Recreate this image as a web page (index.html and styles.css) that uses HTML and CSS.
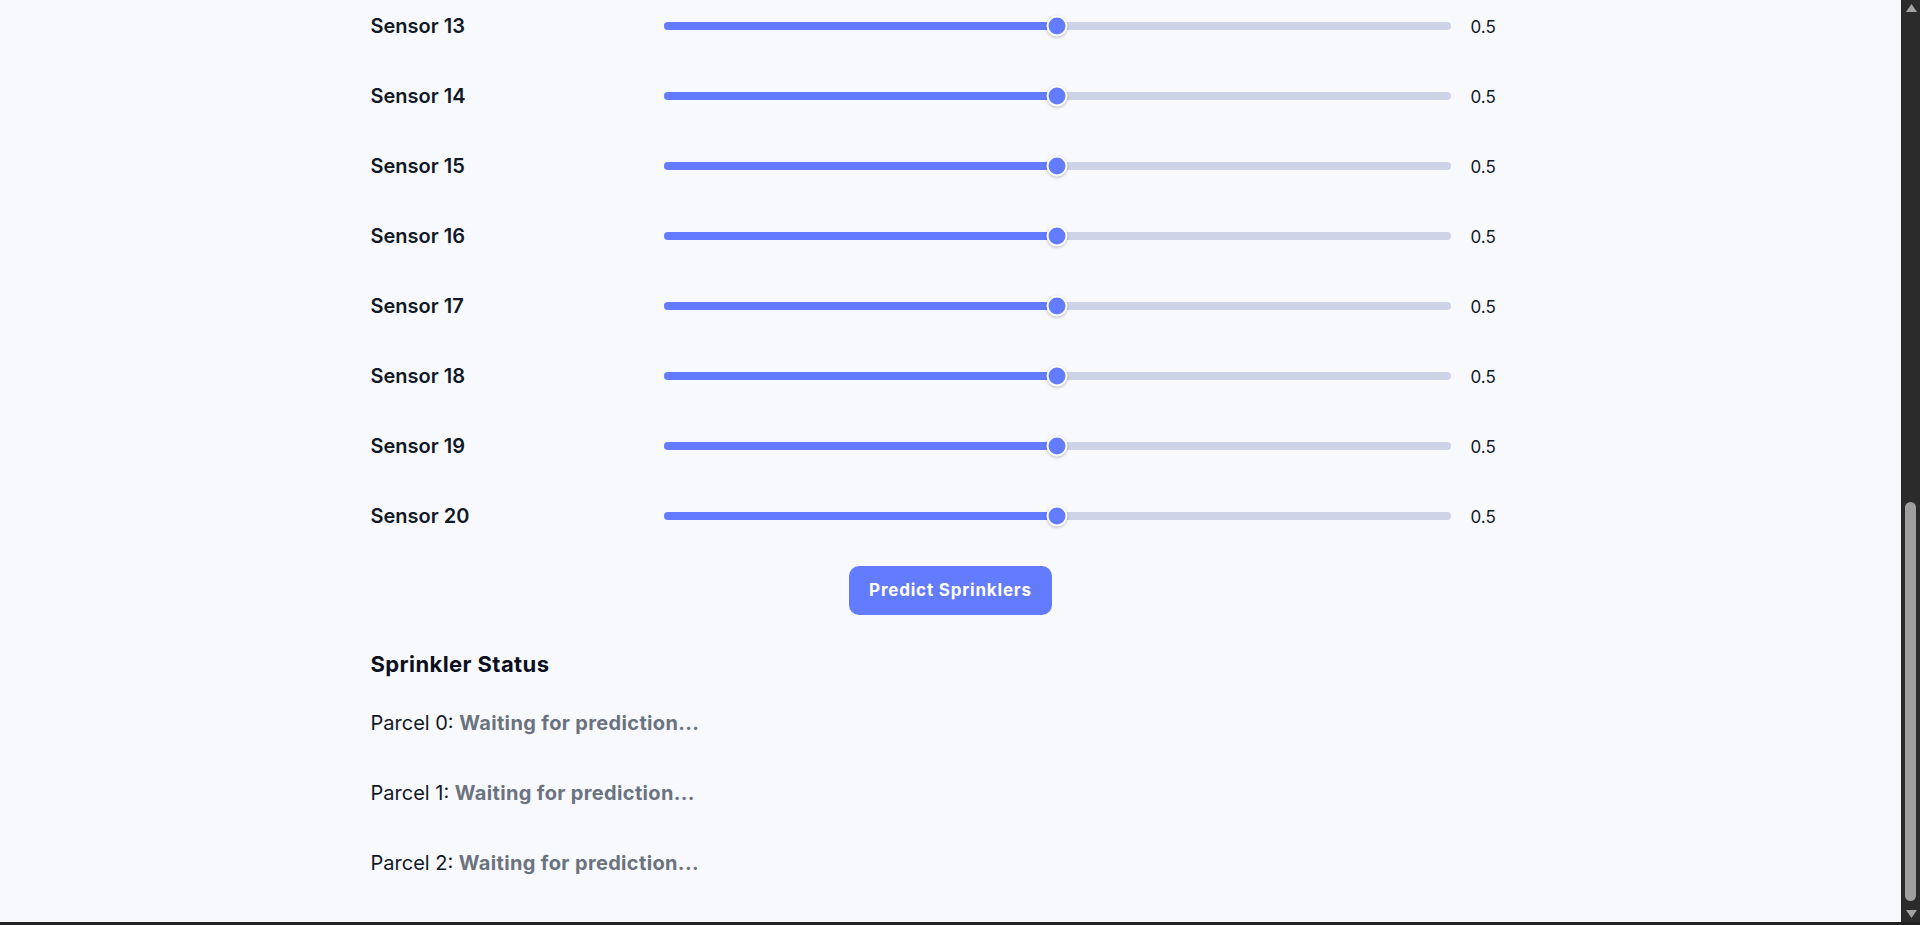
FILE: index.html
```html
<!DOCTYPE html>
<html lang="en">
<head>
<meta charset="utf-8">
<title>Sprinkler Predictor</title>
<link rel="stylesheet" href="styles.css">
</head>
<body>
<div class="window">
  <div class="viewport">
    <main class="container">
      <section class="sensors">
        <div class="sensor-row"><label class="sensor-label">Sensor 13</label><div class="slider"><div class="slider-fill" style="width:50%"></div><div class="slider-thumb" style="left:50%"></div></div><span class="sensor-value">0.5</span></div>
        <div class="sensor-row"><label class="sensor-label">Sensor 14</label><div class="slider"><div class="slider-fill" style="width:50%"></div><div class="slider-thumb" style="left:50%"></div></div><span class="sensor-value">0.5</span></div>
        <div class="sensor-row"><label class="sensor-label">Sensor 15</label><div class="slider"><div class="slider-fill" style="width:50%"></div><div class="slider-thumb" style="left:50%"></div></div><span class="sensor-value">0.5</span></div>
        <div class="sensor-row"><label class="sensor-label">Sensor 16</label><div class="slider"><div class="slider-fill" style="width:50%"></div><div class="slider-thumb" style="left:50%"></div></div><span class="sensor-value">0.5</span></div>
        <div class="sensor-row"><label class="sensor-label">Sensor 17</label><div class="slider"><div class="slider-fill" style="width:50%"></div><div class="slider-thumb" style="left:50%"></div></div><span class="sensor-value">0.5</span></div>
        <div class="sensor-row"><label class="sensor-label">Sensor 18</label><div class="slider"><div class="slider-fill" style="width:50%"></div><div class="slider-thumb" style="left:50%"></div></div><span class="sensor-value">0.5</span></div>
        <div class="sensor-row"><label class="sensor-label">Sensor 19</label><div class="slider"><div class="slider-fill" style="width:50%"></div><div class="slider-thumb" style="left:50%"></div></div><span class="sensor-value">0.5</span></div>
        <div class="sensor-row"><label class="sensor-label">Sensor 20</label><div class="slider"><div class="slider-fill" style="width:50%"></div><div class="slider-thumb" style="left:50%"></div></div><span class="sensor-value">0.5</span></div>
      </section>
      <div class="actions">
        <button class="predict-btn" type="button">Predict Sprinklers</button>
      </div>
      <section class="status">
        <h2 class="status-title">Sprinkler Status</h2>
        <p class="parcel">Parcel 0: <strong class="parcel-state">Waiting for prediction...</strong></p>
        <p class="parcel">Parcel 1: <strong class="parcel-state">Waiting for prediction...</strong></p>
        <p class="parcel">Parcel 2: <strong class="parcel-state">Waiting for prediction...</strong></p>
      </section>
    </main>
  </div>
  <div class="scrollbar">
    <div class="sb-button sb-up"><svg width="11" height="8" viewBox="0 0 11 8"><polygon points="5.5,0 11,8 0,8" fill="#a3a3a3"/></svg></div>
    <div class="sb-track"><div class="sb-thumb"></div></div>
    <div class="sb-button sb-down"><svg width="11" height="8" viewBox="0 0 11 8"><polygon points="0,0 11,0 5.5,8" fill="#a3a3a3"/></svg></div>
  </div>
</div>
<div class="bottom-edge"></div>
</body>
</html>
```

FILE: styles.css
```css
* { box-sizing: border-box; }

html, body {
  margin: 0;
  padding: 0;
  height: 925px;
  overflow: hidden;
}

body {
  display: flex;
  flex-direction: column;
  font-family: "Inter", "Liberation Sans", sans-serif;
  color: #111827;
  background: #222;
}

.window {
  display: flex;
  height: 922px;
}

.viewport {
  flex: 1;
  background: #f7f9fc;
  overflow: hidden;
}

.container {
  max-width: 1200px;
  margin: -9px auto 0;
  padding: 0 20px;
}

.sensor-row {
  display: flex;
  align-items: center;
  height: 70px;
  gap: 20px;
}

.sensor-label {
  flex: 0 0 273px;
  font-size: 20px;
  font-weight: 600;
  color: #111827;
}

.slider {
  position: relative;
  flex: 1;
  height: 8px;
  border-radius: 4px;
  background: #cfd3e8;
}

.slider-fill {
  height: 100%;
  border-radius: 4px;
  background: #637bfe;
}

.slider-thumb {
  position: absolute;
  top: 50%;
  width: 21px;
  height: 21px;
  border-radius: 50%;
  background: #637bfe;
  border: 2px solid #ffffff;
  box-shadow: 0 1px 3px rgba(0, 0, 0, 0.25);
  transform: translate(-50%, -50%);
}

.sensor-value {
  flex: 0 0 60px;
  margin-top: 1px;
  font-size: 17px;
  color: #111827;
}

.actions {
  display: flex;
  justify-content: center;
  margin-top: 15px;
}

.predict-btn {
  border: none;
  border-radius: 10px;
  background: #637bfe;
  color: #ffffff;
  font-family: inherit;
  font-size: 17px;
  font-weight: 700;
  letter-spacing: 0.8px;
  line-height: 21px;
  padding: 14px 20px;
  cursor: pointer;
}

.status-title {
  margin: 34px 0 9px;
  font-size: 22px;
  line-height: 30px;
  font-weight: 700;
  letter-spacing: 0.4px;
  color: #0b1020;
}

.parcel {
  margin: 0;
  height: 70px;
  display: flex;
  align-items: center;
  white-space: pre;
  font-size: 20px;
  color: #111827;
}

.parcel-state {
  font-weight: 700;
  letter-spacing: 0.35px;
  color: #6b7280;
}

.scrollbar {
  width: 19px;
  display: flex;
  flex-direction: column;
  background: #2b2b2b;
  border-left: 1px solid #242424;
}

.sb-button {
  display: flex;
  justify-content: center;
  align-items: center;
}

.sb-up { height: 14px; padding-top: 2px; }
.sb-down { height: 16px; }

.sb-track {
  flex: 1;
  display: flex;
  flex-direction: column;
  justify-content: flex-end;
  padding: 0 3px 5px 3px;
}

.sb-thumb {
  height: 399px;
  width: 11px;
  border-radius: 6px;
  background: #9f9f9f;
}

.bottom-edge {
  height: 3px;
  background: #222;
}
```
